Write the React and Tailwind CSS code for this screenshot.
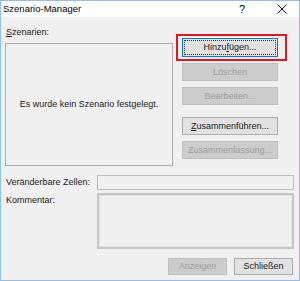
import React from 'react';

const font = { fontFamily: '"Liberation Sans", Arial, sans-serif' };

function Btn({ children, disabled, className = '' }) {
  return (
    <div
      className={`flex items-center justify-center h-[18px] w-[96px] border leading-none whitespace-nowrap ${
        disabled
          ? 'bg-[#cccccc] border-[#bfbfbf] text-[#9d9d9d]'
          : 'bg-[#e1e1e1] border-[#adadad] text-[#1a1a1a]'
      } ${className}`}
    >
      {children}
    </div>
  );
}

export default function App() {
  return (
    <div
      className="w-[300px] h-[281px] flex flex-col border border-[#8fc0ec] bg-[#f0f0f0] text-[9px] text-[#1a1a1a] overflow-hidden whitespace-nowrap"
      style={font}
    >
      {/* title bar */}
      <div className="h-[16px] bg-white flex items-center shrink-0">
        <span className="pl-[2px] text-[9.5px] text-black">Szenario-Manager</span>
        <span className="ml-auto mr-[32px] text-[11px] text-black">?</span>
        <svg className="mr-[12px]" width="10" height="10" viewBox="0 0 10 10">
          <path d="M0.5 0.5 L9.5 9.5 M9.5 0.5 L0.5 9.5" stroke="#111" strokeWidth="1" />
        </svg>
      </div>

      <div className="flex flex-col px-[4px]">
        <div className="flex">
          {/* left column */}
          <div className="flex flex-col w-[168px] pt-[7px]">
            <div className="h-[16px] leading-[16px] pl-[1px]">
              <span className="underline">S</span>zenarien:
            </div>
            <div className="mt-[3px] h-[123px] border border-[#acacac] flex items-center justify-center">
              Es wurde kein Szenario festgelegt.
            </div>
          </div>

          {/* right column */}
          <div className="flex flex-col ml-[3px] pt-[17px]">
            <div className="w-[111px] h-[27px] border-2 border-[#e8141b] pl-[4px] pt-[2px]">
              <div className="w-[96px] h-[19px] border border-[#0078d7] bg-[#e1e1e1] p-[1px] flex">
                <div className="flex-1 border border-dotted border-[#333] flex items-center justify-center leading-none">
                  Hinzu<span className="underline">f</span>ügen...
                </div>
              </div>
            </div>
            <div className="flex flex-col pl-[6px]">
              <Btn disabled className="mt-[2px]">Löschen</Btn>
              <Btn disabled className="mt-[6px]">Bearbeiten...</Btn>
              <Btn className="mt-[12px]">
                <span>
                  <span className="underline">Z</span>usammenführen...
                </span>
              </Btn>
              <Btn disabled className="mt-[6px]">Zusammenfassung...</Btn>
            </div>
          </div>
        </div>

        {/* lower fields */}
        <div className="flex items-center mt-[9px] pl-[1px]">
          <span className="w-[91px]">Veränderbare Zellen:</span>
          <div className="w-[197px] h-[15px] border border-[#bdbdbd]" />
        </div>
        <div className="flex mt-[3px] pl-[1px]">
          <span className="w-[91px] leading-[14px]">Kommentar:</span>
          <div className="w-[197px] h-[56px] border-2 border-[#c6c6c6] shadow-[inset_0_0_0_1px_#e4e4e4]" />
        </div>

        <div className="flex justify-end mt-[9px] pr-[2px] gap-[7px]">
          <div className="w-[59px] h-[17px] border border-[#bfbfbf] bg-[#cccccc] text-[#9d9d9d] flex items-center justify-center leading-none">
            Anzeigen
          </div>
          <div className="w-[59px] h-[17px] border border-[#adadad] bg-[#e1e1e1] flex items-center justify-center leading-none">
            Schließen
          </div>
        </div>
      </div>
    </div>
  );
}
